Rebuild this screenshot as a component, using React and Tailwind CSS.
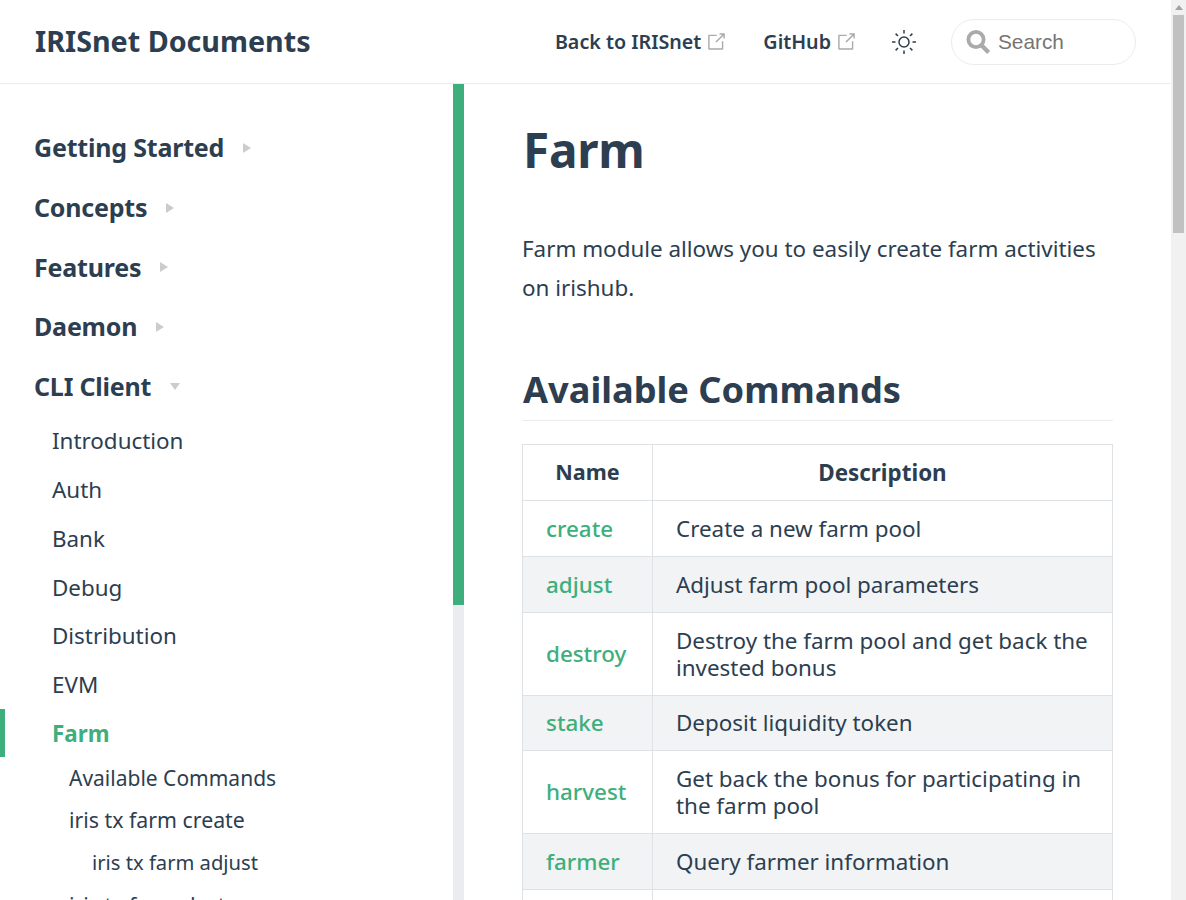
const FONT = "font-['Noto_Sans','Open_Sans',sans-serif]";

function ExternalIcon() {
  return (
    <svg width="17" height="17" viewBox="14 14 72 72" className="text-[#aaaaaa] shrink-0 ml-[7px]" aria-hidden="true">
      <path fill="currentColor" d="M18.8,85.1h56l0,0c2.2,0,4-1.8,4-4v-32h-6v30h-52v-52h30v-6h-32l0,0c-2.2,0-4,1.8-4,4v56C14.8,83.3,16.6,85.1,18.8,85.1z" />
      <polygon fill="currentColor" points="45.7,50 50,54.3 79.2,25.5 79.2,37.2 85.2,37.2 85.2,14.9 62.8,14.9 62.8,20.9 74.5,20.9" />
    </svg>
  );
}

function SunIcon() {
  return (
    <svg width="26" height="26" viewBox="0 0 26 26" fill="none" stroke="#2c3e50" strokeWidth="1.5" aria-hidden="true">
      <circle cx="13" cy="13" r="5" />
      <path d="M13 1v3.5M13 21.5V25M1 13h3.5M21.5 13H25M4.6 4.6l2.4 2.4M19 19l2.4 2.4M4.6 21.4 7 19M19 7l2.4-2.4" />
    </svg>
  );
}

function SearchIcon() {
  return (
    <svg width="24" height="25" viewBox="0 0 24 25" fill="none" aria-hidden="true" className="shrink-0">
      <circle cx="10" cy="10.5" r="7.6" stroke="#aaaaaa" strokeWidth="3.8" />
      <path d="M15.5 16.3 22.6 23.4" stroke="#aaaaaa" strokeWidth="4.2" />
    </svg>
  );
}

function Section({ label, open }) {
  return (
    <div className="h-[59.7px] flex items-center pl-[34px]">
      <span className="text-[25px] tracking-[-0.2px] font-bold leading-none text-[#2c3e50]">{label}</span>
      {open ? (
        <span className="ml-[19px] w-0 h-0 border-x-[5px] border-x-transparent border-t-[7px] border-t-[#cccccc]" />
      ) : (
        <span className="ml-[19px] w-0 h-0 border-y-[5px] border-y-transparent border-l-[8px] border-l-[#cccccc]" />
      )}
    </div>
  );
}

function Item({ label, active }) {
  return (
    <div className={`flex items-center text-[22.4px] leading-none ${active ? "h-[48px] mt-[-1px] mb-[1.4px] pt-[2px] pl-[47px] font-bold text-[#3eaf7c] border-l-[5px] border-[#3eaf7c]" : "h-[48.8px] pl-[52px] text-[#2c3e50]"}`}>
      {label}
    </div>
  );
}

const rows = [
  ["create", ["Create a new farm pool"], 56, false],
  ["adjust", ["Adjust farm pool parameters"], 56, true],
  ["destroy", ["Destroy the farm pool and get back the", "invested bonus"], 83, false],
  ["stake", ["Deposit liquidity token"], 55, true],
  ["harvest", ["Get back the bonus for participating in", "the farm pool"], 83, false],
  ["farmer", ["Query farmer information"], 56, true],
  ["params", [""], 56, false],
];

export default function App() {
  return (
    <div className={`${FONT} h-[900px] w-[1186px] overflow-hidden flex bg-white text-[#2c3e50]`}>
      <div className="w-[1171px] h-full flex flex-col shrink-0">
        <header className="h-[84px] shrink-0 border-b border-[#eaecef] flex items-center pl-[35px] pr-[35px]">
          <span className="text-[28.7px] font-bold leading-none mt-[-1px]">IRISnet Documents</span>
          <nav className="ml-auto flex items-center">
            <span className="text-[19.7px] font-semibold leading-none">Back to IRISnet</span>
            <ExternalIcon />
            <span className="ml-[38px] text-[19.7px] font-semibold leading-none">GitHub</span>
            <ExternalIcon />
            <span className="ml-[36px] flex"><SunIcon /></span>
            <div className="ml-[34px] w-[185px] h-[46px] rounded-[23px] border border-[#eaecef] flex items-center pl-[14px] font-['Liberation_Sans',sans-serif] text-[20.8px] text-[#757575]">
              <SearchIcon />
              <span className="ml-[8px] mt-[1px] leading-none">Search</span>
            </div>
          </nav>
        </header>
        <div className="flex flex-1 min-h-0">
          <aside className="w-[453px] shrink-0 pt-[34px] overflow-hidden">
            <Section label="Getting Started" />
            <Section label="Concepts" />
            <Section label="Features" />
            <Section label="Daemon" />
            <Section label="CLI Client" open />
            <div className="mt-[0.65px]">
              <Item label="Introduction" />
              <Item label="Auth" />
              <Item label="Bank" />
              <Item label="Debug" />
              <Item label="Distribution" />
              <Item label="EVM" />
              <Item label="Farm" active />
            </div>
            <div className="mt-[-2px] text-[21px] leading-none">
              <div className="h-[42.4px] flex items-center pl-[69px] pt-[2px]">Available Commands</div>
              <div className="h-[42.4px] flex items-center pl-[69px] text-[21.3px]">iris tx farm create</div>
              <div className="h-[42.4px] flex items-center pl-[92px] text-[20.2px]">iris tx farm adjust</div>
              <div className="h-[42.4px] flex items-center pl-[69px] text-[21.3px]">iris tx farm destroy</div>
            </div>
          </aside>
          <div className="w-[11px] shrink-0 bg-[#eaecef]">
            <div className="h-[521px] bg-[#3eaf7c]" />
          </div>
          <main className="flex-1 min-w-0 pl-[58px] pr-[58px]">
            <h1 className="text-[47.7px] tracking-[-0.3px] font-bold leading-none mt-[42px] ml-[1px]">Farm</h1>
            <p className="mt-[55px] text-[22.4px] leading-[39px]">
              Farm module allows you to easily create farm activities<br />on irishub.
            </p>
            <h2 className="mt-[53px] h-[61px] border-b border-[#eaecef] text-[36.2px] font-bold leading-[58px] pl-px">
              Available Commands
            </h2>
            <table className="mt-[23px] w-[591px] border-collapse table-fixed text-[22.4px] leading-[27px]">
              <thead>
                <tr className="h-[56px]">
                  <th className="w-[130px] border border-[#dfe2e5] font-bold text-center p-0 pb-[2px] text-[21.6px]">Name</th>
                  <th className="border border-[#dfe2e5] font-bold text-center p-0">Description</th>
                </tr>
              </thead>
              <tbody>
                {rows.map(([name, desc, h, alt]) => (
                  <tr key={name} className={alt ? "bg-[#f1f3f5]" : ""} style={{ height: h }}>
                    <td className="border border-[#dfe2e5] pl-[23px] font-medium text-[#3eaf7c] p-0">{name}</td>
                    <td className="border border-[#dfe2e5] pl-[23px] p-0">
                      {desc.map((l) => <div key={l}>{l}</div>)}
                    </td>
                  </tr>
                ))}
              </tbody>
            </table>
          </main>
        </div>
      </div>
      <div className="w-[15px] shrink-0 bg-[#f1f1f1] flex flex-col items-center">
        <span className="mt-[5px] w-0 h-0 border-x-[4px] border-x-transparent border-b-[5px] border-b-[#a3a3a3]" />
        <div className="mt-[5px] w-[11px] h-[218px] bg-[#c1c1c1]" />
      </div>
    </div>
  );
}
